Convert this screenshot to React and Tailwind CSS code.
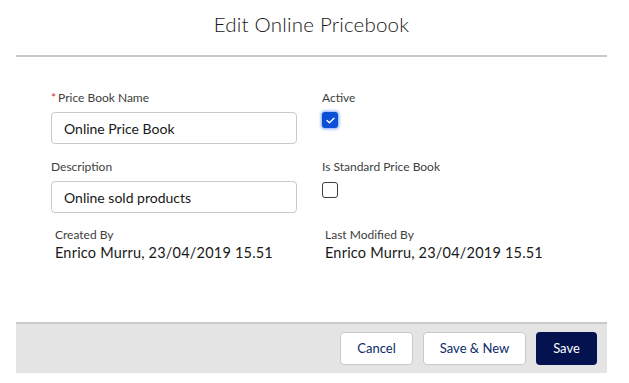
import React from 'react'

const Field = ({ label, value, required }) => (
  <div className="flex flex-col">
    <label className="h-4 text-[12px] leading-4 text-[#3e3e3c]">
      {required && <span className="text-[#c23934] mr-[2px]">*</span>}
      {label}
    </label>
    <div className="mt-1.5 h-8 w-[246px] rounded-[4px] border border-[#c9c9c9] bg-white pl-3 flex items-center text-[14px] text-[#181818]">
      {value}
    </div>
  </div>
)

const Check = ({ label, checked }) => (
  <div className="flex flex-col">
    <label className="h-4 pl-[1px] text-[12px] leading-4 text-[#3e3e3c]">{label}</label>
    <div
      className={
        checked
          ? 'mt-1.5 ml-[1px] h-4 w-4 rounded-[3px] bg-[#0b4fd6] flex items-center justify-center shadow-[0_0_3px_1px_rgba(20,90,230,0.55)]'
          : 'mt-[7px] ml-[1px] h-4 w-4 rounded-[3px] border border-[#3e3e3c] bg-white'
      }
    >
      {checked && (
        <svg width="9" height="7" viewBox="0 0 9 7" fill="none">
          <path d="M1 3.6 L3.4 5.8 L8 1.2" stroke="white" strokeWidth="1.4" strokeLinecap="round" strokeLinejoin="round" />
        </svg>
      )}
    </div>
  </div>
)

const Static = ({ label, value }) => (
  <div className="flex flex-col pl-1">
    <span className="h-4 text-[12px] leading-4 text-[#3e3e3c]">{label}</span>
    <span className="mt-[1px] text-[14.5px] leading-[18px] tracking-[0.2px] text-[#181818]">{value}</span>
  </div>
)

export default function App() {
  return (
    <div className="w-[629px] h-[383px] bg-white overflow-hidden" style={{ fontFamily: 'Lato, "Open Sans", sans-serif' }}>
      <div className="ml-4 mr-[22px]">
        {/* Header */}
        <div className="h-[57px] border-b-2 border-[#c9c9c9] flex items-center justify-center pb-[6px]">
          <h1 className="text-[20.5px] font-light text-[#181818] tracking-[0.2px]">Edit Online Pricebook</h1>
        </div>

        {/* Body */}
        <div className="h-[265px] pt-[33px] pl-[35px]">
          <div className="grid grid-cols-[246px_1fr] gap-x-6 gap-y-[15px]">
            <Field label="Price Book Name" value="Online Price Book" required />
            <Check label="Active" checked />
            <Field label="Description" value="Online sold products" />
            <Check label="Is Standard Price Book" />
            <div className="-mt-px">
              <Static label="Created By" value="Enrico Murru, 23/04/2019 15.51" />
            </div>
            <div className="-mt-px">
              <Static label="Last Modified By" value="Enrico Murru, 23/04/2019 15.51" />
            </div>
          </div>
        </div>

        {/* Footer */}
        <div className="h-[51px] border-t-2 border-[#c9c9c9] bg-[#e5e4e4] flex items-center justify-end gap-[10px] pr-[10px]">
          <button className="h-[33px] w-[73px] rounded-[4px] border border-[#c9c9c9] bg-white text-[13px] text-[#0b2a66]">
            Cancel
          </button>
          <button className="h-[33px] w-[103px] rounded-[4px] border border-[#c9c9c9] bg-white text-[13px] text-[#0b2a66]">
            Save &amp; New
          </button>
          <button className="h-[33px] w-[61px] rounded-[4px] bg-[#04124f] text-[13px] text-white">
            Save
          </button>
        </div>
      </div>
    </div>
  )
}
